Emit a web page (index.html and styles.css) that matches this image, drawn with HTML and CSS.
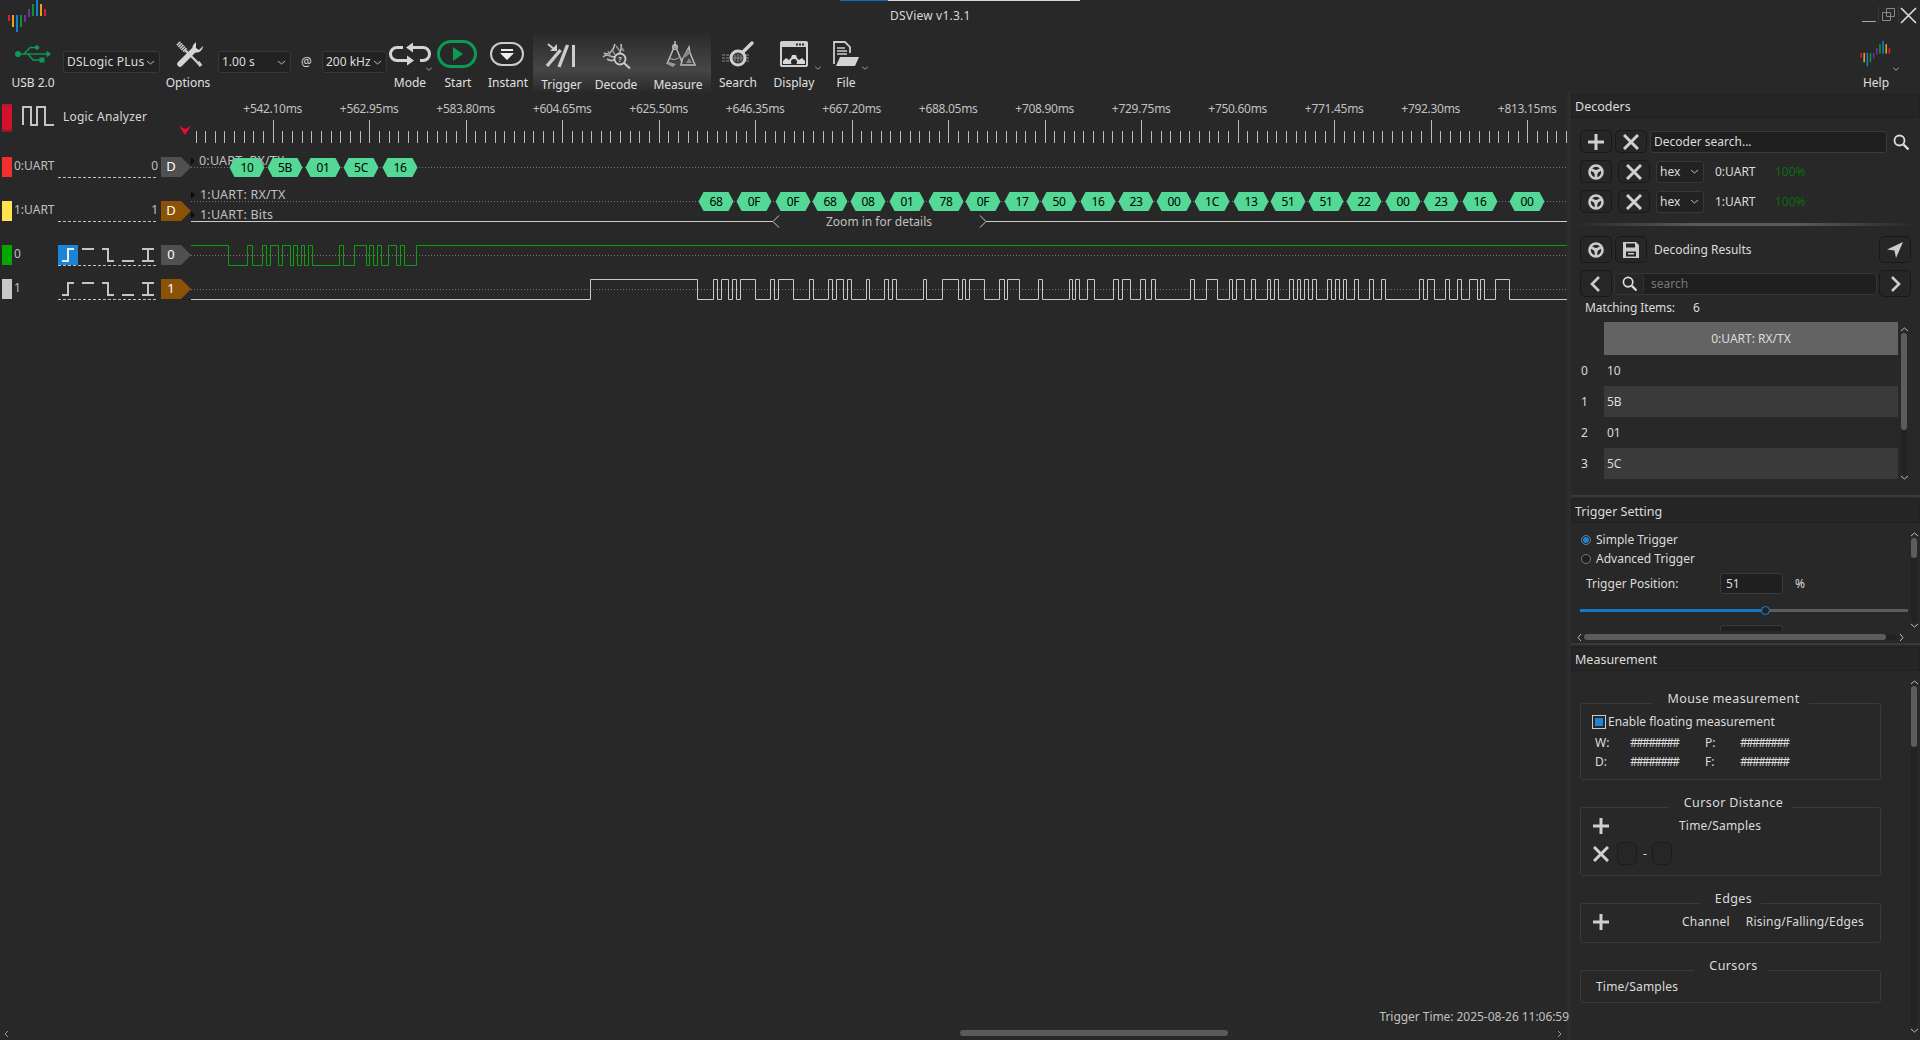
FILE: index.html
```html
<!DOCTYPE html>
<html lang="en">
<head>
<meta charset="utf-8">
<title>DSView v1.3.1</title>
<link rel="stylesheet" href="styles.css">
<script src="app.js"></script>
</head>
<body>
<svg width="0" height="0" class="defs">
  <symbol id="logo" viewBox="0 0 40 33">
    <rect x="0" y="15" width="2" height="6" fill="#d8202c"/>
    <rect x="4" y="15" width="2" height="12" fill="#e8a020"/>
    <rect x="8" y="15" width="2" height="17" fill="#1080d0"/>
    <rect x="12" y="15" width="2" height="12" fill="#109030"/>
    <rect x="16" y="15" width="2" height="7" fill="#7030a0"/>
    <rect x="20" y="9" width="2" height="8" fill="#7030a0"/>
    <rect x="24" y="4" width="2" height="12" fill="#109030"/>
    <rect x="28" y="0" width="2" height="16" fill="#1080d0"/>
    <rect x="32" y="4" width="2" height="12" fill="#e8a020"/>
    <rect x="36" y="9" width="2" height="7" fill="#d8202c"/>
  </symbol>
  <symbol id="chev" viewBox="0 0 9 5"><path d="M1 1l3.5 3L8 1" fill="none" stroke="#bbb"/></symbol>
  <symbol id="chev-up" viewBox="0 0 9 5"><path d="M1 4l3.5-3L8 4" fill="none" stroke="#bbb"/></symbol>
  <symbol id="plus" viewBox="0 0 16 16"><path d="M8 0v16M0 8h16" stroke="#d0d0d0" stroke-width="3"/></symbol>
  <symbol id="cross" viewBox="0 0 16 16"><path d="M1 1l14 14M15 1L1 15" stroke="#d0d0d0" stroke-width="3"/></symbol>
  <symbol id="wheel" viewBox="0 0 16 16">
    <circle cx="8" cy="8" r="6.5" fill="none" stroke="#ccc" stroke-width="2.6"/>
    <circle cx="8" cy="8" r="2.2" fill="#ccc"/>
    <path d="M8 8v6M8 8L2.5 5M8 8l5.500-3" stroke="#ccc" stroke-width="2.6"/>
  </symbol>
  <symbol id="lens" viewBox="0 0 16 16">
    <circle cx="6.500" cy="6.500" r="5" fill="none" stroke="#ddd" stroke-width="1.800"/>
    <path d="M10.500 10.500l5 5" stroke="#ddd" stroke-width="2.400"/>
  </symbol>
</svg>

<header class="titlebar">
  <svg class="app-logo"><use href="#logo"/></svg>
  <span class="app-title">DSView v1.3.1</span>
  <div class="winctl">
    <svg width="16" height="28" viewBox="0 0 16 28"><path d="M0 21.500h14" stroke="#aaa"/></svg>
    <svg width="20" height="28" viewBox="0 0 20 28"><path d="M0 6v18" stroke="#444"/><path d="M8.500 8.500h8v8h-8zM4.500 12.500h8v8h-8z" fill="none" stroke="#888"/></svg>
    <svg width="20" height="28" viewBox="0 0 20 28"><path d="M0 6v18" stroke="#444"/><path d="M3 8l15 15M18 8L3 23" stroke="#ddd" stroke-width="1.600"/></svg>
  </div>
</header>

<nav class="toolbar">
  <div class="tool tool-usb">
    <svg class="tool-icon" viewBox="0 0 46 28">
      <g fill="#0c9a55" stroke="#0c9a55">
        <circle cx="8" cy="14" r="2.600"/>
        <path d="M8 14h30" fill="none" stroke-width="1.400"/>
        <path d="M37 11.500l3.500 2.500-3.500 2.500z"/>
        <path d="M14 14l6-6.500h6M18 14l5 6h7" fill="none" stroke-width="1.400"/>
        <circle cx="27" cy="7.500" r="1.800"/>
        <rect x="30" y="18" width="4" height="4"/>
      </g>
    </svg>
    <span class="tool-label">USB 2.0</span>
  </div>
  <div class="combo combo-device"><span>DSLogic PLus</span><svg class="combo-chev"><use href="#chev"/></svg></div>
  <div class="tool tool-options">
    <svg class="tool-icon" viewBox="0 0 44 28">
      <path d="M12 3l8 8" stroke="#ccc" stroke-width="5" stroke-dasharray="1.500 .7"/>
      <path d="M19 10l14 14" stroke="#ccc" stroke-width="2.400"/>
      <path d="M32 22l3 4" stroke="#ccc" stroke-width="3.400"/>
      <path d="M14 24L28 10" stroke="#d4d4d4" stroke-width="5.500" stroke-linecap="round"/>
      <path d="M27 10a6 6 0 0 1 2-7l1-1v6l3 2 4-4a6.500 6.500 0 0 1-9 6z" fill="#d4d4d4"/>
    </svg>
    <span class="tool-label">Options</span>
  </div>
  <div class="combo combo-time"><span>1.00 s</span><svg class="combo-chev"><use href="#chev"/></svg></div>
  <span class="at-sign">@</span>
  <div class="combo combo-rate"><span>200 kHz</span><svg class="combo-chev"><use href="#chev"/></svg></div>
  <div class="tool tool-mode">
    <svg class="tool-icon" viewBox="0 0 46 28">
      <path d="M25 7.500h11a6.500 6.500 0 0 1 0 13h-3M21 20.500H10a6.500 6.500 0 0 1 0-13h6" fill="none" stroke="#d4d4d4" stroke-width="3"/>
      <path d="M26 2.500v10L19 7.500zM20 15.500v10l7-5z" fill="#d4d4d4"/>
      <use href="#chev" x="38" y="27" width="8" height="4"/>
    </svg>
    <span class="tool-label">Mode</span>
  </div>
  <div class="tool tool-start">
    <svg class="tool-icon" viewBox="0 0 50 28">
      <rect x="5.500" y="1.500" width="37" height="25" rx="12.500" fill="none" stroke="#0c9a55" stroke-width="3"/>
      <path d="M20 7l10 7-10 7z" fill="#0c9a55"/>
    </svg>
    <span class="tool-label">Start</span>
  </div>
  <div class="tool tool-instant">
    <svg class="tool-icon" viewBox="0 0 50 28">
      <rect x="8" y="3" width="32" height="22" rx="11" fill="none" stroke="#ccc" stroke-width="2"/>
      <path d="M18 9h12v2H18zM17 13h14l-7 7z" fill="#eee"/>
    </svg>
    <span class="tool-label">Instant</span>
  </div>
  <div class="tool-group">
    <div class="tool tool-trigger">
      <svg class="tool-icon" viewBox="0 0 57 28">
        <path d="M40.500 5v22" stroke="#ccc" stroke-width="3"/>
        <path d="M34.500 5L26 27M27.500 10L14 26" stroke="#ccc" stroke-width="3.400"/>
        <path d="M15 4l7 6" stroke="#ccc" stroke-width="2"/>
        <path d="M17 11h7V4z" fill="#ccc"/>
      </svg>
      <span class="tool-label">Trigger</span>
    </div>
    <div class="tool tool-decode">
      <svg class="tool-icon" viewBox="0 0 52 28">
        <path d="M13 17c6-6 8 4 15-2 2-2 4-6 3-11" fill="none" stroke="#bbb" stroke-width="1.600"/>
        <path d="M14 13c6 4 10-5 11-9M17 19c3 2 6 2 8 0" fill="none" stroke="#bbb" stroke-width="1.600"/>
        <path d="M18 11l3 6M22 9l3 6M26 6l4 5M31 7l3 4" stroke="#999" stroke-width="1.400"/>
        <circle cx="30" cy="19" r="5.500" fill="#3c3c3c" stroke="#ccc" stroke-width="1.800"/>
        <path d="M34 23l6 5.500" stroke="#ccc" stroke-width="2"/>
        <text x="30" y="22" class="icon-q">?</text>
      </svg>
      <span class="tool-label">Decode</span>
    </div>
    <div class="tool tool-measure">
      <svg class="tool-icon" viewBox="0 0 69 28">
        <path d="M31 1v4M31 5l-8 19M31 5l7 17" fill="none" stroke="#bbb" stroke-width="1.500"/>
        <circle cx="31" cy="7" r="2.400" fill="none" stroke="#bbb" stroke-width="1.200"/>
        <path d="M25.500 18c3 2 7 2 10-1" fill="none" stroke="#bbb"/>
        <path d="M23 24l6 3 3-3-7-2z" fill="#999"/>
        <path d="M38 20L45 7l1 6 5 12H37z" fill="none" stroke="#bbb" stroke-width="1.500"/>
        <path d="M44 9l-6 9 4-1 5-5zM42 23h6l-3-5z" fill="#888"/>
      </svg>
      <span class="tool-label">Measure</span>
    </div>
  </div>
  <div class="tool tool-search">
    <svg class="tool-icon" viewBox="0 0 54 28">
      <path d="M11 15h28M11 18h28M11 21h28" stroke="#5a5a5a" stroke-width="2" stroke-dasharray="3 1"/>
      <circle cx="27" cy="18" r="7" fill="#3a3a3a" stroke="#d0d0d0" stroke-width="3"/>
      <path d="M24 15v6M27 14v8M30 15v6M22 18h10" stroke="#888"/>
      <path d="M32 12l9-9" stroke="#d0d0d0" stroke-width="3.500" stroke-linecap="round"/>
    </svg>
    <span class="tool-label">Search</span>
  </div>
  <div class="tool tool-display">
    <svg class="tool-icon" viewBox="0 0 58 28">
      <rect x="16" y="2" width="26" height="24" rx="1" fill="none" stroke="#d0d0d0" stroke-width="2"/>
      <path d="M16 2h26v5H16z" fill="#d0d0d0"/>
      <path d="M34 3.500h2v2h-2zM37 3.500h2v2h-2zM31 3.500h2v2h-2z" fill="#282828"/>
      <path d="M18 24v-3l3-3 3 2 2-2 1-3h4l1 3 2 2 3-2 3 3v3z" fill="#d8d8d8"/>
      <circle cx="29" cy="22" r="3" fill="#282828"/>
      <use href="#chev" x="49" y="26" width="8" height="4"/>
    </svg>
    <span class="tool-label">Display</span>
  </div>
  <div class="tool tool-file">
    <svg class="tool-icon" viewBox="0 0 46 28">
      <path d="M11 24V2h11l5 5v6" fill="none" stroke="#ccc" stroke-width="1.800"/>
      <path d="M14 8h8M14 11h10M14 14h10" stroke="#ccc" stroke-width="1.300"/>
      <path d="M13 26l4-9h19l-4 9z" fill="#d4d4d4"/>
      <use href="#chev" x="38" y="26" width="8" height="4"/>
    </svg>
    <span class="tool-label">File</span>
  </div>
  <div class="tool tool-help">
    <svg class="tool-icon" viewBox="0 0 60 28">
      <use href="#logo" x="14" y="1" width="32" height="26"/>
      <use href="#chev" x="46" y="27" width="8" height="4"/>
    </svg>
    <span class="tool-label">Help</span>
  </div>
</nav>

<main class="workspace">
  <div class="viewport">
    <svg id="canvas" width="1567" height="948" viewBox="0 92 1567 948">
      <defs>
        <linearGradient id="redfade" x1="0" y1="0" x2="0" y2="1">
          <stop offset="0" stop-color="#a02030"/><stop offset=".12" stop-color="#d4102c"/>
          <stop offset=".88" stop-color="#d4102c"/><stop offset="1" stop-color="#702028"/>
        </linearGradient>
      </defs>

      <rect x="2" y="104" width="10" height="28" fill="url(#redfade)"/>
      <path d="M23 125V107H31V125H37V107H45V125H54" fill="none" stroke="#c4c4c4" stroke-width="2"/>
      <text x="63" y="121" class="cv cv-head">Logic Analyzer</text>
      <path d="M179 126l6 3 6-3-6 9z" fill="#e01030"/>
      <g id="ruler"></g>

      <g class="dotted">
        <path d="M191 167.500H1567M191 201.500H1567M191 255.500H1567M191 289.500H1567"/>
      </g>
      <g class="dashed">
        <path d="M58 177.500H158M58 221.500H158M58 265.500H158M58 299.500H158"/>
      </g>

      <rect x="2" y="157" width="10" height="20" fill="#f22f2f"/>
      <text x="14" y="170" class="cv">0:UART</text>
      <text x="158" y="170" class="cv cv-end">0</text>
      <path d="M161 157h20l10 10-10 10h-20z" fill="#505050"/>
      <text x="171" y="171" class="cv cv-tag">D</text>

      <rect x="2" y="201" width="10" height="20" fill="#ffe44d"/>
      <text x="14" y="214" class="cv">1:UART</text>
      <text x="158" y="214" class="cv cv-end">1</text>
      <path d="M161 201h20l10 10-10 10h-20z" fill="#8b5205"/>
      <text x="171" y="215" class="cv cv-tag">D</text>

      <rect x="2" y="245" width="10" height="20" fill="#00a800"/>
      <text x="14" y="258" class="cv">0</text>
      <rect x="58" y="245" width="20" height="20" fill="#1a84d8"/>
      <path d="M62 261H68V249H74" class="edge edge-on"/>
      <path d="M82 249H94M102 249H108V261H114M122 261H134M142 249H154M142 261H154M148 249V261" class="edge"/>
      <path d="M161 245h20l10 10-10 10h-20z" fill="#505050"/>
      <text x="171" y="259" class="cv cv-tag">0</text>

      <rect x="2" y="279" width="10" height="20" fill="#c8c8c8"/>
      <text x="14" y="292" class="cv">1</text>
      <path d="M62 295H68V283H74M82 283H94M102 283H108V295H114M122 295H134M142 283H154M142 295H154M148 283V295" class="edge"/>
      <path d="M161 279h20l10 10-10 10h-20z" fill="#8b5205"/>
      <text x="171" y="293" class="cv cv-tag">1</text>

      <text x="199" y="165" class="cv cv-dec">0:UART: RX/TX</text>
      <text x="200" y="199" class="cv cv-dec">1:UART: RX/TX</text>
      <text x="200" y="219" class="cv cv-dec">1:UART: Bits</text>
      <path d="M191 157l4 4-4 4zM191 191l4 4-4 4zM191 211l4 4-4 4z" fill="#0c0c0c"/>

      <path d="M191 221.500H773l6-6M773 221.500l6 6M986 221.500H1567M986 221.500l-6-6M986 221.500l-6 6" fill="none" stroke="#ccc"/>
      <text x="879" y="226" class="cv cv-mid cv-zoom">Zoom in for details</text>

      <g id="hexes"></g>
      <path id="wave0" fill="none" stroke="#0d9e0d"/>
      <path id="wave1" fill="none" stroke="#c8c8c8"/>

      <text x="1569" y="1021" class="cv cv-end cv-time">Trigger Time: 2025-08-26 11:06:59</text>
      <path d="M8 1031l-3 3 3 3M1558 1031l3 3-3 3" fill="none" stroke="#999"/>
      <rect x="960" y="1030" width="268" height="6" rx="3" fill="#5a5a5a"/>
    </svg>
  </div>

  <aside class="dockbar">
    <section class="dock dock-decoders">
      <h2 class="dock-title">Decoders</h2>
      <div class="row row-first">
        <button class="ibtn"><svg><use href="#plus"/></svg></button>
        <button class="ibtn"><svg><use href="#cross"/></svg></button>
        <div class="field field-search">Decoder search...</div>
        <svg class="search-go"><use href="#lens"/></svg>
      </div>
      <div class="row row-dec">
        <button class="ibtn"><svg><use href="#wheel"/></svg></button>
        <button class="ibtn ibtn-gap"><svg><use href="#cross"/></svg></button>
        <div class="combo combo-hex"><span>hex</span><svg class="combo-chev"><use href="#chev"/></svg></div>
        <span class="dec-name">0:UART</span>
        <span class="dec-pct">100%</span>
      </div>
      <div class="row row-dec">
        <button class="ibtn"><svg><use href="#wheel"/></svg></button>
        <button class="ibtn ibtn-gap"><svg><use href="#cross"/></svg></button>
        <div class="combo combo-hex"><span>hex</span><svg class="combo-chev"><use href="#chev"/></svg></div>
        <span class="dec-name">1:UART</span>
        <span class="dec-pct">100%</span>
      </div>
      <div class="fade-line"></div>
      <div class="row row-tall row-results">
        <button class="ibtn"><svg><use href="#wheel"/></svg></button>
        <button class="ibtn">
          <svg viewBox="0 0 16 16"><path d="M0 0h13l3 3v13H0zM3 1.500v4h9v-4zM3 9.500v5h10v-5z" fill="#ccc" fill-rule="evenodd"/><path d="M5 11h6v1.500H5z" fill="#ccc"/></svg>
        </button>
        <span class="results-title">Decoding Results</span>
        <button class="ibtn ibtn-end">
          <svg viewBox="0 0 16 16"><path d="M16 0L0 7.500l7.500 1L9 16z" fill="#ccc"/></svg>
        </button>
      </div>
      <div class="row row-tall row-find">
        <button class="ibtn"><svg viewBox="0 0 16 16"><path d="M11 1L4 8l7 7" fill="none" stroke="#ccc" stroke-width="2.600"/></svg></button>
        <div class="find-box">
          <span class="find-btn"><svg><use href="#lens"/></svg></span>
          <span class="find-hint">search</span>
        </div>
        <button class="ibtn"><svg viewBox="0 0 16 16"><path d="M5 1l7 7-7 7" fill="none" stroke="#ccc" stroke-width="2.600"/></svg></button>
      </div>
      <div class="matching"><span class="matching-label">Matching Items:</span><span>6</span></div>
      <div class="results">
        <div class="results-grid">
          <span></span><div class="results-head">0:UART: RX/TX</div>
          <span class="rnum">0</span><div class="rcell">10</div>
          <span class="rnum">1</span><div class="rcell rcell-alt">5B</div>
          <span class="rnum">2</span><div class="rcell">01</div>
          <span class="rnum">3</span><div class="rcell rcell-alt">5C</div>
        </div>
        <div class="vscroll vscroll-results">
          <svg class="sb-arrow"><use href="#chev-up"/></svg>
          <div class="track"><div class="thumb thumb-results"></div></div>
          <svg class="sb-arrow"><use href="#chev"/></svg>
        </div>
      </div>
    </section>
    <div class="splitter"></div>

    <section class="dock dock-trigger">
      <h2 class="dock-title">Trigger Setting</h2>
      <div class="trigger-wrap">
        <div class="trigger-body">
          <label class="radio-row radio-first"><span class="radio radio-on"></span>Simple Trigger</label>
          <label class="radio-row"><span class="radio"></span>Advanced Trigger</label>
          <div class="pos-row">
            <span class="pos-label">Trigger Position:</span>
            <div class="field field-pos">51</div>
            <span class="pos-unit">%</span>
          </div>
          <div class="slider"><div class="slider-fill"></div><span class="slider-knob"></span></div>
          <div class="clipped"><div class="field field-pos"></div></div>
        </div>
        <div class="vscroll vscroll-trigger">
          <svg class="sb-arrow"><use href="#chev-up"/></svg>
          <div class="track"><div class="thumb thumb-trigger"></div></div>
          <svg class="sb-arrow"><use href="#chev"/></svg>
        </div>
      </div>
      <div class="hscroll">
        <svg width="5" height="9" viewBox="0 0 5 9"><path d="M4 1L1 4.500 4 8" fill="none" stroke="#bbb"/></svg>
        <div class="htrack"><div class="hthumb"></div></div>
        <svg width="5" height="9" viewBox="0 0 5 9"><path d="M1 1l3 3.500L1 8" fill="none" stroke="#bbb"/></svg>
      </div>
    </section>
    <div class="splitter"></div>

    <section class="dock dock-measure">
      <h2 class="dock-title">Measurement</h2>
      <div class="measure-wrap">
        <div class="measure-body">
          <fieldset class="box">
            <legend>Mouse measurement</legend>
            <label class="check-row"><span class="check"><i></i></span>Enable floating measurement</label>
            <div class="mgrid">
              <span>W:</span><span class="mval">########</span><span>P:</span><span class="mval">########</span>
              <span>D:</span><span class="mval">########</span><span>F:</span><span class="mval">########</span>
            </div>
          </fieldset>
          <fieldset class="box box-cursor">
            <legend>Cursor Distance</legend>
            <div class="box-line">
              <svg class="bicon"><use href="#plus"/></svg>
              <span class="col-time">Time/Samples</span>
            </div>
            <div class="box-line box-line-dist">
              <svg class="bicon"><use href="#cross"/></svg>
              <span class="mini"></span><span class="dash">-</span><span class="mini"></span>
            </div>
          </fieldset>
          <fieldset class="box box-edges">
            <legend>Edges</legend>
            <div class="box-line">
              <svg class="bicon"><use href="#plus"/></svg>
              <span class="col-chan">Channel</span>
              <span class="col-rise">Rising/Falling/Edges</span>
            </div>
          </fieldset>
          <fieldset class="box box-cursors">
            <legend>Cursors</legend>
            <div class="cursor-head">Time/Samples</div>
          </fieldset>
        </div>
        <div class="vscroll vscroll-measure">
          <svg class="sb-arrow"><use href="#chev-up"/></svg>
          <div class="track"><div class="thumb thumb-measure"></div></div>
          <svg class="sb-arrow"><use href="#chev"/></svg>
        </div>
      </div>
    </section>
  </aside>
</main>
</body>
</html>
```

FILE: styles.css
```css
* { margin: 0; padding: 0; box-sizing: border-box; }
html, body { width: 1920px; height: 1040px; overflow: hidden; }
body {
  background: #282828;
  color: #dcdcdc;
  font: 12px/16px "Noto Sans", sans-serif;
  position: relative;
}
.defs { position: absolute; }

/* title bar */
.titlebar { height: 28px; position: relative; display: flex; justify-content: flex-end; }
.titlebar::before {
  content: "";
  position: absolute;
  left: 840px; top: 0;
  width: 240px; height: 1px;
  background: linear-gradient(90deg, #0a6ac8 0 48px, #d8d8d8 48px);
}
.app-logo { position: absolute; left: 8px; top: 0; width: 40px; height: 33px; }
.app-title { position: absolute; left: 890px; top: 8px; color: #d8d8d8; letter-spacing: .2px; }
.winctl { display: flex; margin-right: 2px; }

/* tool bar */
.toolbar { height: 64px; display: flex; align-items: flex-start; }
.tool { display: flex; flex-direction: column; align-items: center; flex: none; }
.tool-icon { display: block; width: 100%; height: 28px; margin: 12px 0 7px; overflow: visible; }
.tool-label { white-space: nowrap; color: #e0e0e0; }
.tool-usb { width: 46px; margin-left: 10px; }
.tool-options { width: 44px; margin-left: 6px; }
.tool-mode { width: 46px; }
.tool-start { width: 50px; }
.tool-instant { width: 50px; }
.tool-trigger { width: 57px; }
.tool-decode { width: 52px; }
.tool-measure { width: 69px; padding-left: 3px; }
.tool-measure .tool-icon { margin-left: -3px; width: 69px; }
.tool-search { width: 54px; }
.tool-display { width: 58px; }
.tool-file { width: 46px; }
.tool-help { width: 60px; margin: 0 14px 0 auto; }
.tool-group {
  display: flex;
  flex: none;
  height: 59px;
  margin-top: 5px;
  background: linear-gradient(180deg, #2a2a2a, #464646 62%, #2a2a2a);
}
.tool-group .tool-icon { margin: 7px 0 9px; }
.icon-q { font-size: 7px; font-weight: 700; fill: #ddd; text-anchor: middle; }

.combo {
  display: flex;
  align-items: center;
  justify-content: space-between;
  height: 22px;
  flex: none;
  padding: 0 4px 0 3px;
  background: #222;
  border: 1px solid #383838;
  border-radius: 3px;
}
.combo-chev { width: 9px; height: 5px; }
.toolbar .combo { margin-top: 23px; }
.combo-device { width: 97px; margin-left: 7px; letter-spacing: .2px; }
.combo-time { width: 73px; margin-left: 8px; }
.combo-rate { width: 65px; }
.at-sign { width: 31px; margin-top: 26px; text-align: center; flex: none; }

/* wave area */
.workspace { display: flex; height: 948px; }
.viewport { width: 1571px; flex: none; border-right: 4px solid #2d2d2d; }
#canvas { display: block; overflow: visible; }
.cv { font: 12px "Noto Sans", sans-serif; fill: #c0c0c0; }
.cv-head { fill: #d8d8d8; letter-spacing: .2px; }
.cv-end { text-anchor: end; }
.cv-mid { text-anchor: middle; }
.cv-tag { fill: #fff; text-anchor: middle; font-size: 13px; }
.cv-hex { fill: #000; text-anchor: middle; letter-spacing: -.3px; }
.cv-rule { letter-spacing: -.3px; }
.cv-dec { font-size: 12.5px; letter-spacing: .2px; }
.cv-time { letter-spacing: -.05px; }
.tick { stroke: #bdbdbd; fill: none; }
.dotted path { stroke: #777; stroke-dasharray: 1 2; fill: none; }
.dashed path { stroke: #c0c0c0; stroke-dasharray: 3 2; fill: none; }
.edge { fill: none; stroke: #c4c4c4; stroke-width: 2; }
.edge-on { stroke: #eee; }
.hex { fill: #53d995; }

/* docks */
.dockbar { width: 349px; flex: none; display: flex; flex-direction: column; }
.dock { flex: none; }
.dock-decoders { height: 403px; }
.dock-trigger { height: 146px; }
.dock-measure { flex: 1; }
.splitter { height: 2px; flex: none; background: #3a3a3a; }
.dock-title {
  height: 24px;
  margin-top: 2px;
  padding-left: 3px;
  background: #252525;
  border: 1px solid #202020;
  font-size: 12.500px;
  font-weight: 400;
  line-height: 24px;
  color: #dcdcdc;
}

.row { display: flex; align-items: center; height: 23px; margin-left: 9px; }
.row-first { margin-top: 12px; gap: 3px; }
.row-dec { margin-top: 7px; }
.row-tall { height: 27px; }
.fade-line {
  height: 3px;
  margin: 10px 4px 0;
  background: linear-gradient(90deg, #282828, #5a5a5a 35%, #5a5a5a 65%, #282828);
}
.row-results { margin-top: 10px; gap: 3px; }
.row-find { margin-top: 7px; gap: 2px; }
.ibtn {
  width: 32px;
  height: 100%;
  flex: none;
  display: flex;
  align-items: center;
  justify-content: center;
  background: #262626;
  border: 1px solid #181818;
  border-radius: 5px;
}
.ibtn svg { width: 16px; height: 16px; }
.ibtn-gap { margin: 0 6px 0 6px; }
.ibtn-end { margin-left: auto; margin-right: 9px; }
.field { background: #1f1f1f; border: 1px solid #3a3a3a; border-radius: 3px; }
.field-search { width: 237px; height: 22px; padding-left: 3px; line-height: 20px; }
.search-go { width: 16px; height: 16px; margin-left: 3px; }
.combo-hex { width: 48px; height: 22px; }
.dec-name { width: 60px; margin-left: 11px; }
.dec-pct { color: #0a6e0a; }
.results-title { margin-left: 4px; }
.find-box {
  width: 263px;
  height: 22px;
  display: flex;
  align-items: center;
  background: #1f1f1f;
  border: 1px solid #333;
  border-radius: 4px;
}
.find-btn {
  width: 29px;
  height: 100%;
  display: flex;
  align-items: center;
  justify-content: center;
  background: #262626;
  border-right: 1px solid #333;
  border-radius: 4px;
}
.find-btn svg { width: 15px; height: 15px; }
.find-hint { margin-left: 7px; color: #777; }
.matching { display: flex; height: 16px; margin: 3px 0 0 14px; }
.matching-label { width: 108px; letter-spacing: -.1px; }
.results { display: flex; height: 162px; margin: 6px 0 0 9px; }
.results-grid {
  display: grid;
  width: 318px;
  grid-template-columns: 24px 294px;
  grid-template-rows: 33px repeat(4, 31px);
}
.results-head {
  background: #636363;
  text-align: center;
  line-height: 33px;
}
.rnum { line-height: 31px; color: #dcdcdc; padding-left: 1px; }
.rcell { line-height: 31px; padding-left: 3px; }
.rcell-alt { background: #3a3a3a; }

.vscroll { width: 12px; flex: none; display: flex; flex-direction: column; align-items: center; gap: 1px; }
.sb-arrow { width: 9px; height: 5px; flex: none; }
.track { flex: 1; width: 6px; background: #222; border-radius: 3px; }
.thumb { width: 6px; background: #5c5c5c; border-radius: 3px; }
.vscroll-results { padding: 5px 0 4px; }
.thumb-results { height: 97px; }
.thumb-trigger { height: 20px; }
.thumb-measure { height: 61px; }

/* trigger dock */
.trigger-wrap { display: flex; height: 109px; }
.trigger-body { width: 337px; overflow: hidden; padding-left: 9px; }
.radio-row { display: flex; align-items: center; height: 16px; margin-top: 3px; }
.radio-first { margin-top: 9px; }
.radio {
  width: 10px;
  height: 10px;
  margin: 0 5px 0 1px;
  border: 1px solid #777;
  border-radius: 50%;
  background: #1f1f1f;
}
.radio-on { background: #1a84d8; box-shadow: inset 0 0 0 1px #222; }
.pos-row { display: flex; align-items: center; height: 21px; margin-top: 6px; }
.pos-label { width: 134px; margin-left: 6px; flex: none; }
.field-pos { width: 63px; height: 21px; padding-left: 5px; line-height: 19px; flex: none; }
.pos-unit { margin-left: 12px; }
.slider { position: relative; width: 328px; height: 3px; margin-top: 15px; background: #5c5c5c; }
.slider-fill { width: 185px; height: 3px; background: #1478c8; }
.slider-knob {
  position: absolute;
  left: 181px; top: -3px;
  width: 9px; height: 9px;
  background: #222;
  border: 1.500px solid #1a84d8;
  border-radius: 50%;
}
.clipped { height: 6px; margin: 13px 0 0 140px; overflow: hidden; }
.vscroll-trigger { padding-top: 9px; padding-bottom: 4px; }
.hscroll { display: flex; align-items: center; gap: 2px; height: 10px; margin: 0 0 0 6px; }
.htrack { width: 313px; height: 6px; background: #222; border-radius: 3px; }
.hthumb { width: 302px; height: 6px; background: #5c5c5c; border-radius: 3px; }

/* measurement dock */
.measure-wrap { display: flex; height: 369px; }
.measure-body { width: 337px; padding: 20px 0 0 9px; }
.vscroll-measure { padding: 9px 0 7px; }
.box {
  width: 301px;
  margin-top: 15px;
  border: 1px solid #3a3a3a;
  border-radius: 3px;
}
.box:first-child { margin-top: 0; }
.box legend {
  margin: 0 auto;
  padding: 0 9px 8px 15px;
  font-size: 12.500px;
  line-height: 16px;
  letter-spacing: .4px;
  white-space: nowrap;
}
.box { height: 89px; }
.box-cursor { height: 81px; }
.box-edges { height: 52px; }
.box-cursors { height: 45px; }
.check-row { display: flex; align-items: center; height: 14px; margin-left: 11px; }
.check {
  width: 14px;
  height: 14px;
  margin-right: 2px;
  padding: 2px;
  border: 1px solid #ccc;
}
.check i { display: block; width: 100%; height: 100%; background: #1a84d8; }
.mgrid {
  display: grid;
  grid-template-columns: 35px 75px 35px auto;
  grid-auto-rows: 19px;
  margin: 6px 0 0 14px;
}
.mval { letter-spacing: -1.7px; }
.box-line { display: flex; align-items: center; height: 16px; margin-top: -1px; letter-spacing: .2px; }
.bicon { width: 16px; height: 16px; margin-left: 12px; flex: none; }
.col-time { margin-left: 70px; }
.col-chan { margin-left: 73px; }
.col-rise { margin-left: 16px; }
.box-line-dist { height: 23px; margin-top: 8px; }
.mini {
  width: 20px;
  height: 23px;
  margin-left: 8px;
  background: #262626;
  border: 1px solid #1c1c1c;
  border-radius: 5px;
}
.mini + .dash + .mini { margin-left: 5px; }
.dash { margin-left: 6px; }
.cursor-head { margin: -3px 0 0 15px; letter-spacing: .2px; }
```

FILE: app.js
```js
window.onload = function () {
  var NS = "http://www.w3.org/2000/svg";

  function add(parent, name, attrs, text) {
    var el = document.createElementNS(NS, name);
    for (var k in attrs) el.setAttribute(k, attrs[k]);
    if (text) el.textContent = text;
    parent.appendChild(el);
  }

  // ruler: one long tick and a label every 10 ticks
  var ruler = document.getElementById("ruler");
  var d = "";
  for (var i = -8; i < 150; i++) {
    var x = Math.round(272.7 + i * 9.65) + 0.5;
    if (x > 1567) break;
    d += "M" + x + (((i % 10) + 10) % 10 == 0 ? " 120" : " 131") + "V143";
  }
  add(ruler, "path", { d: d, "class": "tick" });
  for (var n = 0; n < 14; n++) {
    var label = "+" + (542.1 + n * 20.85).toFixed(2) + "ms";
    add(ruler, "text", { x: 272.7 + n * 96.5, y: 113, "class": "cv cv-mid cv-rule" }, label);
  }

  // protocol blocks
  var hexes = document.getElementById("hexes");
  function hex(cx, top, txt) {
    var p = [cx - 17.5, top + 9.5, cx - 12.5, top, cx + 12.5, top, cx + 17.5, top + 9.5, cx + 12.5, top + 19, cx - 12.5, top + 19];
    add(hexes, "polygon", { points: p.join(" "), "class": "hex" });
    add(hexes, "text", { x: cx, y: top + 14, "class": "cv cv-hex" }, txt);
  }
  [[247, "10"], [285, "5B"], [323, "01"], [361, "5C"], [400, "16"]].forEach(function (h) {
    hex(h[0], 158, h[1]);
  });
  [[716, "68"], [754, "0F"], [793, "0F"], [830, "68"], [868, "08"], [907, "01"], [946, "78"],
   [983, "0F"], [1022, "17"], [1059, "50"], [1098, "16"], [1136, "23"], [1174, "00"], [1212, "1C"],
   [1251, "13"], [1288, "51"], [1326, "51"], [1364, "22"], [1403, "00"], [1441, "23"], [1480, "16"],
   [1527, "00"]].forEach(function (h) {
    hex(h[0], 192, h[1]);
  });

  // edges alternate, first value is the start level
  function wave(id, hi, lo, startHigh, edges) {
    var level = startHigh;
    var y = function () { return level ? hi : lo; };
    var s = "M191 " + y();
    edges.forEach(function (e) {
      s += "H" + (e + 0.5);
      level = !level;
      s += "V" + y();
    });
    s += "H1567";
    document.getElementById(id).setAttribute("d", s);
  }

  wave("wave0", 245.5, 265.5, true, [228, 247, 252, 262, 266, 270, 278, 282, 290, 293, 297, 301, 304,
    308, 312, 339, 343, 354, 366, 369, 373, 377, 381, 388, 396, 400, 404, 416]);

  wave("wave1", 279.5, 299.5, false, [590, 697, 713, 717, 721, 728, 732, 736, 740, 755, 770, 774, 778,
    793, 809, 813, 828, 832, 836, 843, 847, 851, 866, 869, 884, 888, 892, 896, 923, 926, 942, 958,
    962, 965, 969, 984, 999, 1004, 1007, 1019, 1038, 1042, 1069, 1072, 1075, 1079, 1087, 1094, 1113,
    1118, 1122, 1130, 1140, 1145, 1151, 1155, 1190, 1194, 1206, 1217, 1229, 1232, 1236, 1244, 1251,
    1255, 1267, 1270, 1274, 1278, 1289, 1293, 1297, 1300, 1304, 1308, 1312, 1316, 1327, 1331, 1335,
    1339, 1343, 1346, 1354, 1358, 1369, 1373, 1381, 1385, 1419, 1423, 1427, 1434, 1445, 1449, 1457,
    1461, 1469, 1477, 1480, 1484, 1495, 1509]);
};
```
